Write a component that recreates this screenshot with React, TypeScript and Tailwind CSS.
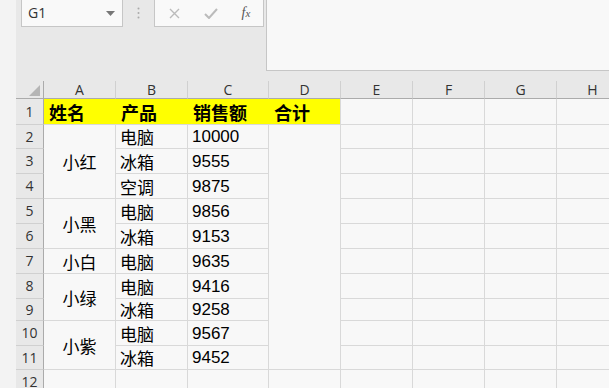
import React from "react";

const cjk = { fontFamily: '"Noto Sans CJK SC", sans-serif' };
const num = { fontFamily: '"Liberation Sans", "Noto Sans CJK SC", sans-serif' };
const ui = { fontFamily: '"Open Sans", "Noto Sans", sans-serif' };

const colW = [28, 72, 72, 81, 72, 72, 72, 72, 72];
const rowH = [26, 24, 25, 25, 25, 25, 25, 25, 22, 25, 24, 25];
const letters = ["A", "B", "C", "D", "E", "F", "G", "H"];

type Cell = { r: number; c: number; rs?: number; text?: string; kind?: "cjk" | "num" | "name" };

const cells: Cell[] = [];
// names (merged col A)
const names: [number, number, string][] = [
  [2, 3, "小红"],
  [5, 2, "小黑"],
  [7, 1, "小白"],
  [8, 2, "小绿"],
  [10, 2, "小紫"],
];
names.forEach(([r, rs, t]) => cells.push({ r, c: 1, rs, text: t, kind: "name" }));
const data: [string, string][] = [
  ["电脑", "10000"],
  ["冰箱", "9555"],
  ["空调", "9875"],
  ["电脑", "9856"],
  ["冰箱", "9153"],
  ["电脑", "9635"],
  ["电脑", "9416"],
  ["冰箱", "9258"],
  ["电脑", "9567"],
  ["冰箱", "9452"],
];
data.forEach(([p, v], i) => {
  cells.push({ r: i + 2, c: 2, text: p, kind: "cjk" });
  cells.push({ r: i + 2, c: 3, text: v, kind: "num" });
});
cells.push({ r: 2, c: 4, rs: 10 });
for (let r = 2; r <= 12; r++) for (let c = 5; c <= 8; c++) cells.push({ r, c });
for (let c = 1; c <= 4; c++) if (true) cells.push({ r: 12, c });

export default function App() {
  return (
    <div className="flex w-[609px] h-[388px] overflow-hidden bg-[#f3f3f3]">
      <div className="w-[16px] shrink-0 bg-[#f3f3f3]" />
      <div className="flex flex-col flex-1 min-w-0 bg-[#e8e8e8]">
        {/* formula bar area */}
        <div className="flex h-[81px] shrink-0">
          <div className="flex items-start w-[250px] shrink-0">
            <div
              className="ml-[5px] w-[102px] h-[27px] border border-t-0 border-[#c6c6c6] bg-[#f9f9f9] flex items-center justify-between pl-[6px] pr-[7px]"
              style={ui}
            >
              <span className="text-[14px] text-[#333] leading-none">G1</span>
              <svg width="9" height="5" viewBox="0 0 9 5">
                <path d="M0 0 L9 0 L4.5 5 Z" fill="#777" />
              </svg>
            </div>
            <div className="w-[31px] h-[26px] flex items-center justify-center">
              <svg width="3" height="12" viewBox="0 0 3 12">
                <circle cx="1.5" cy="1.5" r="1" fill="#aaa" />
                <circle cx="1.5" cy="6" r="1" fill="#aaa" />
                <circle cx="1.5" cy="10.5" r="1" fill="#aaa" />
              </svg>
            </div>
            <div className="w-[110px] h-[27px] border border-t-0 border-[#c6c6c6] bg-[#f9f9f9] flex items-center">
              <div className="w-[38px] flex justify-center">
                <svg width="11" height="11" viewBox="0 0 11 11">
                  <path d="M1 1 L10 10 M10 1 L1 10" stroke="#bbb" strokeWidth="1.4" />
                </svg>
              </div>
              <div className="w-[36px] flex justify-center">
                <svg width="14" height="11" viewBox="0 0 14 11">
                  <path d="M1 6 L5 10 L13 1" stroke="#bbb" strokeWidth="2" fill="none" />
                </svg>
              </div>
              <div className="w-[34px] flex justify-center">
                <span
                  className="italic text-[14px] text-[#555] leading-none"
                  style={{ fontFamily: '"Liberation Serif", serif' }}
                >
                  f<span className="text-[11px]">x</span>
                </span>
              </div>
            </div>
          </div>
          <div className="flex-1 h-[71px] border-l border-b border-[#c6c6c6] bg-[#f8f8f8]" />
        </div>
        {/* grid */}
        <div
          className="grid bg-[#f8f8f8]"
          style={{
            gridTemplateColumns: colW.map((w) => w + "px").join(" "),
            gridTemplateRows: ["18px", ...rowH.map((h) => h + "px")].join(" "),
          }}
        >
          {/* corner */}
          <div
            className="bg-[#e8e8e8] border-r border-b border-[#ababab] relative"
            style={{ gridRow: 1, gridColumn: 1 }}
          >
            <svg className="absolute right-[3px] bottom-[2px]" width="11" height="11" viewBox="0 0 11 11">
              <path d="M11 0 L11 11 L0 11 Z" fill="#b5b5b5" />
            </svg>
          </div>
          {letters.map((l, i) => (
            <div
              key={l}
              className="bg-[#e8e8e8] border-r border-b border-r-[#d0d0d0] border-b-[#ababab] flex items-center justify-center text-[14px] text-[#333] leading-none"
              style={{ gridRow: 1, gridColumn: i + 2, ...ui }}
            >
              {l}
            </div>
          ))}
          {/* row headers */}
          {rowH.map((_, i) => (
            <div
              key={i}
              className="bg-[#e8e8e8] border-r border-b border-r-[#ababab] border-b-[#d0d0d0] flex items-center justify-center text-[14px] text-[#333] leading-none"
              style={{ gridRow: i + 2, gridColumn: 1, ...ui }}
            >
              {i + 1}
            </div>
          ))}
          {/* row 1 headers */}
          {["姓名", "产品", "销售额", "合计"].map((t, i) => (
            <div
              key={t}
              className={`bg-[#ffff00] border-b border-[#d9d9d9] flex items-center pl-[5px] text-[18px] font-bold text-black leading-none ${i === 3 ? "border-r" : ""}`}
              style={{ gridRow: 2, gridColumn: i + 2, ...cjk }}
            >
              {t}
            </div>
          ))}
          {[5, 6, 7, 8].map((c) => (
            <div
              key={c}
              className="border-r border-b border-[#d9d9d9]"
              style={{ gridRow: 2, gridColumn: c + 1 }}
            />
          ))}
          {cells.map((cell, i) => (
            <div
              key={i}
              className={`border-r border-b border-[#d9d9d9] flex items-center text-black leading-none ${
                cell.kind === "name" ? "justify-center text-[17px]" : "pl-[4px] text-[17px]"
              }`}
              style={{
                gridRow: `${cell.r + 1} / span ${cell.rs ?? 1}`,
                gridColumn: cell.c + 1,
                ...(cell.kind === "num" ? num : cjk),
              }}
            >
              {cell.text}
            </div>
          ))}
        </div>
      </div>
    </div>
  );
}
